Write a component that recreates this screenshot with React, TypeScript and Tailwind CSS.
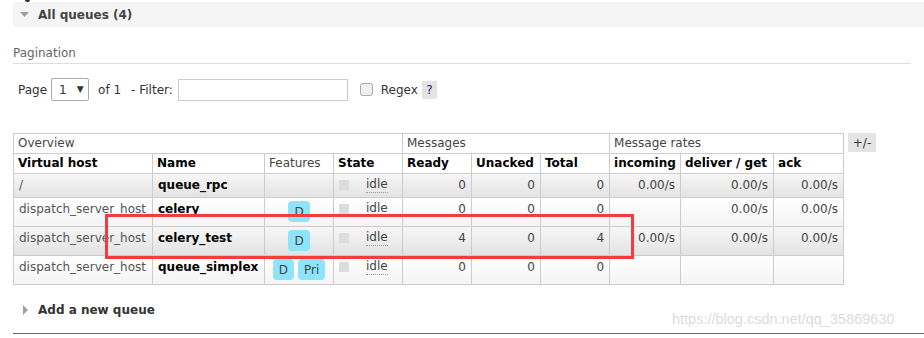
import React from "react";

const cols = [139, 112, 69, 69, 69, 69, 69, 71, 93, 70];

type Row = {
  vhost: string;
  name: string;
  features: string[];
  ready: string;
  unacked: string;
  total: string;
  incoming: string;
  deliver: string;
  ack: string;
  alt: boolean;
};

const rows: Row[] = [
  { vhost: "/", name: "queue_rpc", features: [], ready: "0", unacked: "0", total: "0", incoming: "0.00/s", deliver: "0.00/s", ack: "0.00/s", alt: true },
  { vhost: "dispatch_server_host", name: "celery", features: ["D"], ready: "0", unacked: "0", total: "0", incoming: "", deliver: "0.00/s", ack: "0.00/s", alt: false },
  { vhost: "dispatch_server_host", name: "celery_test", features: ["D"], ready: "4", unacked: "0", total: "4", incoming: "0.00/s", deliver: "0.00/s", ack: "0.00/s", alt: true },
  { vhost: "dispatch_server_host", name: "queue_simplex", features: ["D", "Pri"], ready: "0", unacked: "0", total: "0", incoming: "", deliver: "", ack: "", alt: false },
];

const td = "border border-[#cccccc] align-top pt-[3px] pb-[4px] px-[5px] leading-[16px]";
const th = "border border-[#cccccc] px-[4px] py-[2px] leading-[15px] text-left";

function Badge({ label }: { label: string }) {
  return (
    <span className="inline-flex h-[21px] items-center justify-center rounded-[4px] bg-[#8fe3fa] px-[6px] text-[#444]">
      {label}
    </span>
  );
}

export default function App() {
  return (
    <div className="relative h-[338px] w-[924px] overflow-hidden bg-white font-['DejaVu_Sans',sans-serif] text-[12px] text-[#444]">
      <div className="h-[2px] pl-[25px]">
        <div className="h-[2px] w-[5px] rounded-b-[2px] bg-[#333]" />
      </div>
      <div className="ml-[13px] flex h-[25px] items-center bg-[#f5f5f5] pl-[7px]">
        <svg width="9" height="5" viewBox="0 0 9 5">
          <polygon points="0,0 9,0 4.5,5" fill="#a0a0a0" />
        </svg>
        <span className="ml-[9px] font-bold text-[#444]">All queues (4)</span>
      </div>

      <div className="mx-[13px] mt-[18px] border-b border-[#dddddd] pb-[2px] leading-[16px] text-[#666]">
        Pagination
      </div>

      <div className="ml-[18px] mt-[14px] flex h-[23px] items-center text-[#333]">
        <span>Page</span>
        <div className="ml-[4px] flex h-[23px] w-[38px] items-center rounded-[2px] border border-[#aaaaaa] bg-white pl-[7px]">
          <span>1</span>
          <span className="ml-[10px] text-[9px]">▼</span>
        </div>
        <span className="ml-[9px]">of 1</span>
        <span className="ml-[10px]">- Filter:</span>
        <div className="ml-[5px] h-[22px] w-[170px] border border-[#cccccc] bg-white" />
        <div className="ml-[12px] h-[13px] w-[13px] rounded-[3px] border border-[#aaaaaa] bg-[#f0f0f0]" />
        <span className="ml-[8px]">Regex</span>
        <span className="ml-[4px] flex h-[18px] w-[15px] items-center justify-center bg-[#e4e4e4] text-[#3a1a6a]">?</span>
      </div>

      <div className="ml-[13px] mt-[32px] flex items-start">
        <table className="w-[830px] table-fixed border-collapse">
          <colgroup>
            {cols.map((w, i) => (
              <col key={i} style={{ width: w }} />
            ))}
          </colgroup>
          <thead>
            <tr className="bg-white">
              <th colSpan={4} className={th + " font-normal text-[#444]"}>Overview</th>
              <th colSpan={3} className={th + " font-normal text-[#444]"}>Messages</th>
              <th colSpan={3} className={th + " font-normal text-[#444]"}>Message rates</th>
            </tr>
            <tr className="bg-white">
              <th className={th + " font-bold text-black"}>Virtual host</th>
              <th className={th + " font-bold text-black"}>Name</th>
              <th className={th + " font-normal text-[#444]"}>Features</th>
              <th className={th + " font-bold text-black"}>State</th>
              <th className={th + " font-bold text-black"}>Ready</th>
              <th className={th + " font-bold text-black"}>Unacked</th>
              <th className={th + " font-bold text-black"}>Total</th>
              <th className={th + " font-bold text-black"}>incoming</th>
              <th className={th + " whitespace-nowrap font-bold text-black"}>deliver / get</th>
              <th className={th + " font-bold text-black"}>ack</th>
            </tr>
          </thead>
          <tbody>
            {rows.map((r, i) => (
              <tr
                key={i}
                className={
                  r.alt
                    ? "bg-gradient-to-b from-[#f7f7f7] to-[#e2e2e2]"
                    : "bg-gradient-to-b from-[#ffffff] to-[#f4f4f4]"
                }
              >
                <td className={td + " whitespace-nowrap text-[#555]"}>{r.vhost}</td>
                <td className={td + " whitespace-nowrap font-bold text-black"}>{r.name}</td>
                <td className={"border border-[#cccccc] px-[4px] pb-[4px] pt-[3px] align-top leading-[16px]"}>
                  {r.features.length > 0 && (
                    <div className="flex h-[21px] items-start justify-center gap-[4px]">
                      {r.features.map((f) => (
                        <Badge key={f} label={f} />
                      ))}
                    </div>
                  )}
                </td>
                <td className={td}>
                  <div className="flex items-center">
                    <div className="h-[10px] w-[10px] bg-[#dddddd]" />
                    <span className="ml-[17px] border-b border-dotted border-[#999999] leading-[15px] text-[#444]">idle</span>
                  </div>
                </td>
                <td className={td + " text-right"}>{r.ready}</td>
                <td className={td + " text-right"}>{r.unacked}</td>
                <td className={td + " text-right"}>{r.total}</td>
                <td className={td + " text-right"}>{r.incoming}</td>
                <td className={td + " text-right"}>{r.deliver}</td>
                <td className={td + " text-right"}>{r.ack}</td>
              </tr>
            ))}
          </tbody>
        </table>
        <div className="ml-[4px] flex h-[19px] w-[28px] items-center justify-center bg-[#e4e4e4] text-[#333]">+/-</div>
      </div>

      <div className="ml-[23px] mt-[17px] flex h-[16px] items-center">
        <svg width="5" height="10" viewBox="0 0 5 10">
          <polygon points="0,0 5,5 0,10" fill="#a0a0a0" />
        </svg>
        <span className="ml-[10px] font-bold leading-[16px] text-[#333]">Add a new queue</span>
      </div>

      <div className="absolute bottom-[4px] left-[13px] right-0 h-px bg-[#666]" />

      <div className="absolute left-[672px] top-[310px] font-['Liberation_Sans',sans-serif] text-[14.5px] leading-[18px] text-[#dcdcdc]">
        https://blog.csdn.net/qq_35869630
      </div>

      <div className="absolute left-[105px] top-[214px] h-[45px] w-[529px] border-[3px] border-[#f43c3c]" />
    </div>
  );
}
